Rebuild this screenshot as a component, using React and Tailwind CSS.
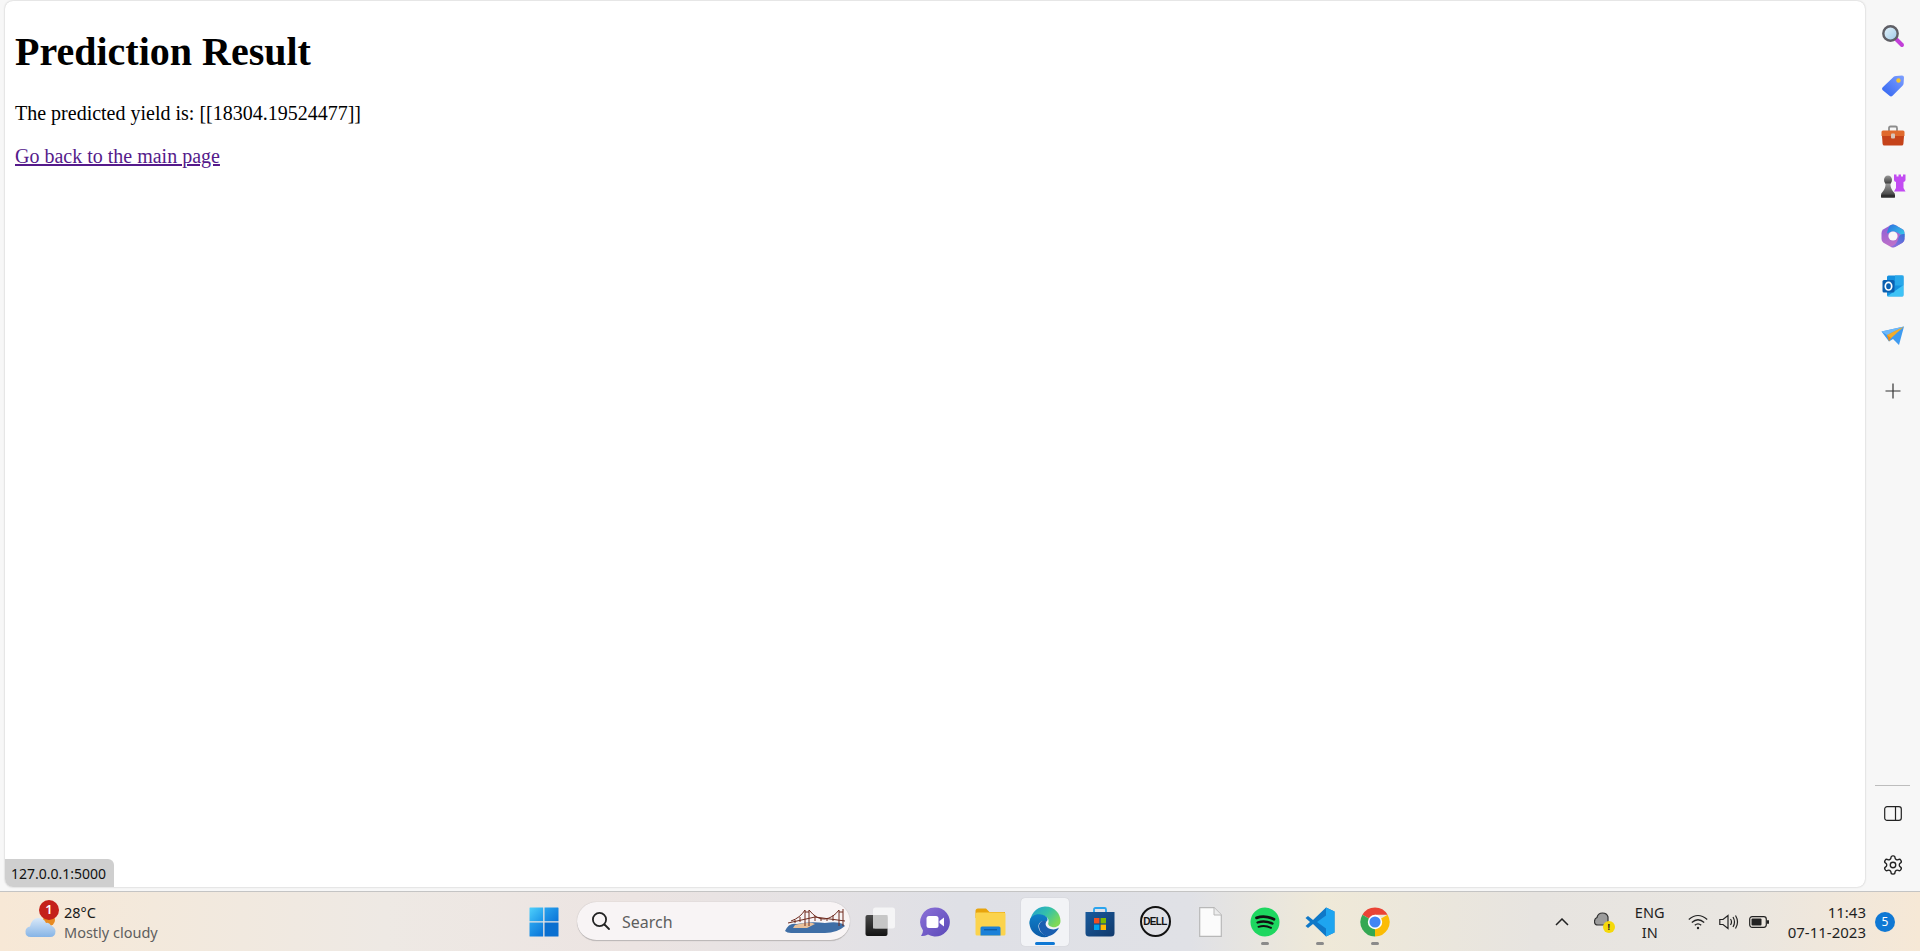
import React from "react";

const Search3D = () => (
  <svg width="24" height="24" viewBox="0 0 24 24">
    <defs><linearGradient id="lens" x1="0" y1="0" x2="1" y2="1"><stop offset="0" stopColor="#e8f4fb"/><stop offset="1" stopColor="#9cc9e8"/></linearGradient></defs>
    <path d="M14 14 L21 21" stroke="#c23fd8" strokeWidth="4" strokeLinecap="round"/>
    <circle cx="9.5" cy="9.5" r="7.2" fill="url(#lens)" stroke="#5f5f66" strokeWidth="2.4"/>
  </svg>
);
const Tag = () => (
  <svg width="24" height="24" viewBox="0 0 24 24">
    <defs><linearGradient id="tag" x1="0" y1="1" x2="1" y2="0"><stop offset="0" stopColor="#2f63f0"/><stop offset="1" stopColor="#7fa0ff"/></linearGradient></defs>
    <path d="M1.5 13.5 L13 2.6 Q13.8 2 15 2 L21 1.5 Q23 1.5 23 3.5 L22.6 9.5 Q22.5 10.8 21.5 11.7 L11.5 21.8 Q10 23 8.5 21.8 L1.5 16 Q0.5 14.8 1.5 13.5Z" fill="url(#tag)"/>
    <circle cx="17.5" cy="6.5" r="2.2" fill="#f6c62f"/>
  </svg>
);
const Toolbox = () => (
  <svg width="24" height="22" viewBox="0 0 24 22">
    <path d="M8 6 V3 Q8 1.5 9.5 1.5 H14.5 Q16 1.5 16 3 V6" fill="none" stroke="#8d8d8d" strokeWidth="1.8"/>
    <path d="M0.5 7 Q0.5 5.5 2 5.5 H22 Q23.5 5.5 23.5 7 V11 H0.5Z" fill="#e06a2d"/>
    <path d="M1 11 H23 L22.4 19 Q22.2 20.5 20.6 20.5 H3.4 Q1.8 20.5 1.6 19Z" fill="#c5431a"/>
    <rect x="10" y="8.5" width="4" height="5" rx="1" fill="#d8c4b8"/>
  </svg>
);
const Chess = () => (
  <svg width="26" height="24" viewBox="0 0 26 24">
    <defs><linearGradient id="pawn" x1="0" y1="0" x2="0" y2="1"><stop offset="0" stopColor="#9a9a9a"/><stop offset="1" stopColor="#333"/></linearGradient></defs>
    <path d="M14 0.5 H16.5 V2.5 H18.5 V0.5 H21 V2.5 H23 V0.5 H25.5 V6 Q25.5 7.5 23.5 8 V14 L25.5 17.5 H14 L16 14 V8 Q14 7.5 14 6Z" fill="#c24bf2"/>
    <ellipse cx="8" cy="6" rx="4" ry="4.5" fill="url(#pawn)"/>
    <path d="M5.6 9.5 H10.4 Q10.4 14.5 13.5 18 Q15 19 15 21 V23.5 H1 V21 Q1 19 2.5 18 Q5.6 14.5 5.6 9.5Z" fill="url(#pawn)"/>
    <rect x="1" y="20.8" width="14" height="2.7" rx="1" fill="#2f2f2f"/>
  </svg>
);
const M365 = () => (
  <svg width="24" height="24" viewBox="0 0 24 24">
    <defs>
      <linearGradient id="ma" x1="0" y1="0" x2="0.3" y2="1"><stop offset="0" stopColor="#8a5fd8"/><stop offset="1" stopColor="#c070c8"/></linearGradient>
      <linearGradient id="mb" x1="0" y1="0" x2="1" y2="0.7"><stop offset="0" stopColor="#2a6fe0"/><stop offset="1" stopColor="#38c4e8"/></linearGradient>
      <linearGradient id="mc" x1="0" y1="1" x2="1" y2="0"><stop offset="0" stopColor="#9a6fe0"/><stop offset="1" stopColor="#3a70d8"/></linearGradient>
    </defs>
    <path d="M9.5 1.2 Q12 0 14.5 1.2 L21.5 5.3 Q23.5 6.5 23.5 9 V15 Q23.5 17.5 21.5 18.7 L14.5 22.8 Q12 24 9.5 22.8 L2.5 18.7 Q0.5 17.5 0.5 15 V9 Q0.5 6.5 2.5 5.3Z" fill="url(#ma)"/>
    <path d="M9.5 1.2 Q12 0 14.5 1.2 L21.5 5.3 Q23.5 6.5 23.5 9 V13 L18 9.5 Q12 5.5 6 9.5 Q7 3 9.5 1.2Z" fill="url(#mb)"/>
    <path d="M23.5 10 V15 Q23.5 17.5 21.5 18.7 L14.5 22.8 Q12 23.8 9.5 22.8 Q16 21 17.5 14 Q18.5 9.5 23.5 10Z" fill="url(#mc)"/>
    <circle cx="12" cy="12" r="4.6" fill="#f7f7f7"/>
  </svg>
);
const Outlook = () => (
  <svg width="22" height="22" viewBox="0 0 22 22">
    <rect x="5" y="0.5" width="16.5" height="21" rx="1.5" fill="#1490df"/>
    <rect x="13" y="0.5" width="8.5" height="10" fill="#28a8ea"/>
    <path d="M5 21.5 L21.5 10 V20 Q21.5 21.5 20 21.5Z" fill="#50d9ff" opacity=".7"/>
    <rect x="0.5" y="5" width="12" height="12.5" rx="1.5" fill="#0a5fb0"/>
    <ellipse cx="6.5" cy="11.2" rx="3.2" ry="3.8" fill="none" stroke="#fff" strokeWidth="1.7"/>
  </svg>
);
const Send = () => (
  <svg width="24" height="20" viewBox="0 0 24 20">
    <path d="M0.5 5.5 L23 0.5 L18 19 L12 13 L8 15.5Z" fill="#3f9bf0"/>
    <path d="M0.5 5.5 L23 0.5 L6 9 Z" fill="#6fb8f8"/>
    <path d="M6 9 L23 0.5 L8 14 Z" fill="#f3ac2a"/>
    <path d="M6 9 L8 15.5 L10 12Z" fill="#e78a1a"/>
  </svg>
);

const SidebarSlot = ({ children, h = "h-[50px]" }) => (
  <div className={`${h} flex items-center justify-center`}>{children}</div>
);

const Sidebar = () => (
  <div className="w-[55px] shrink-0 flex flex-col items-stretch">
    <div className="pt-[11px]">
      <SidebarSlot><Search3D /></SidebarSlot>
      <SidebarSlot><Tag /></SidebarSlot>
      <SidebarSlot><Toolbox /></SidebarSlot>
      <SidebarSlot><Chess /></SidebarSlot>
      <SidebarSlot><M365 /></SidebarSlot>
      <SidebarSlot><Outlook /></SidebarSlot>
      <SidebarSlot><Send /></SidebarSlot>
      <SidebarSlot h="h-[60px]">
        <svg width="16" height="16" viewBox="0 0 16 16"><path d="M8 0.5 V15.5 M0.5 8 H15.5" stroke="#333" strokeWidth="1.2"/></svg>
      </SidebarSlot>
    </div>
    <div className="mt-auto pb-[4px] flex flex-col items-center">
      <div className="w-[35px] h-px bg-[#bdbdbd] mb-[20px]" />
      <svg width="18" height="15" viewBox="0 0 18 15" className="mb-[33px]"><rect x="0.7" y="0.7" width="16.6" height="13.6" rx="2.4" fill="none" stroke="#222" strokeWidth="1.2"/><path d="M11.5 0.7 V14.3" stroke="#222" strokeWidth="1.2"/></svg>
      <svg width="22" height="22" viewBox="0 0 24 24" className="mb-[11px]" fill="none" stroke="#222" strokeWidth="1.5" strokeLinejoin="round"><path d="M12.22 2h-.44a2 2 0 0 0-2 2v.18a2 2 0 0 1-1 1.73l-.43.25a2 2 0 0 1-2 0l-.15-.08a2 2 0 0 0-2.73.73l-.22.38a2 2 0 0 0 .73 2.73l.15.1a2 2 0 0 1 1 1.72v.51a2 2 0 0 1-1 1.74l-.15.09a2 2 0 0 0-.73 2.73l.22.38a2 2 0 0 0 2.73.73l.15-.08a2 2 0 0 1 2 0l.43.25a2 2 0 0 1 1 1.73V20a2 2 0 0 0 2 2h.44a2 2 0 0 0 2-2v-.18a2 2 0 0 1 1-1.73l.43-.25a2 2 0 0 1 2 0l.15.08a2 2 0 0 0 2.73-.73l.22-.39a2 2 0 0 0-.73-2.73l-.15-.08a2 2 0 0 1-1-1.74v-.5a2 2 0 0 1 1-1.74l.15-.09a2 2 0 0 0 .73-2.73l-.22-.38a2 2 0 0 0-2.73-.73l-.15.08a2 2 0 0 1-2 0l-.43-.25a2 2 0 0 1-1-1.73V4a2 2 0 0 0-2-2z"/><circle cx="12" cy="12" r="3"/></svg>
    </div>
  </div>
);

const WeatherIcon = () => (
  <div className="relative w-[36px] h-[36px] shrink-0">
    <svg width="31" height="25" viewBox="0 0 31 25" className="absolute left-[1px] bottom-[2px]">
      <defs><linearGradient id="cl" x1="0" y1="0" x2="0" y2="1"><stop offset="0" stopColor="#d8e8f8"/><stop offset="1" stopColor="#86b4e6"/></linearGradient></defs>
      <circle cx="24" cy="7" r="6" fill="#e88a20"/>
      <path d="M6 24 Q0 24 0.5 18 Q1 14 5 13.5 Q7 5 13 5 Q19 5 21 10 Q24 9 26 12.5 Q30 14 30.5 18 Q30.5 24 25 24Z" fill="url(#cl)"/>
    </svg>
    <div className="absolute left-[15px] top-[-4px] w-[20px] h-[20px] rounded-full bg-[#c4201a] text-white flex items-center justify-center text-[13px] font-semibold leading-none">1</div>
  </div>
);

const WinLogo = () => (
  <svg width="30" height="30" viewBox="0 0 30 30">
    <defs>
      <linearGradient id="w1" x1="0" y1="0" x2="1" y2="1"><stop offset="0" stopColor="#4fd0fb"/><stop offset="1" stopColor="#1a94e8"/></linearGradient>
      <linearGradient id="w2" x1="0" y1="0" x2="1" y2="1"><stop offset="0" stopColor="#2aa4ee"/><stop offset="1" stopColor="#0a74d8"/></linearGradient>
    </defs>
    <path d="M1 0.5 H14.2 V14.2 H0.5 V1Q0.5 0.5 1 0.5Z" fill="url(#w1)"/>
    <path d="M15.5 0.5 H29 Q29.5 0.5 29.5 1 V14.2 H15.5Z" fill="url(#w2)"/>
    <path d="M0.5 15.5 H14.2 V29.5 H1 Q0.5 29.5 0.5 29Z" fill="url(#w2)"/>
    <path d="M15.5 15.5 H29.5 V29 Q29.5 29.5 29 29.5 H15.5Z" fill="#0a6fd0"/>
  </svg>
);

const Bridge = () => (
  <svg width="62" height="24" viewBox="0 0 62 24" className="absolute right-[3px] top-[7px]">
    <path d="M0 22 Q4 13 12 15 Q25 12 40 14 Q52 12 58 15 L60 17 Q52 24 40 24 H6 Q2 24 0 22Z" fill="#3f6ea6"/>
    <path d="M10 16 Q25 12 30 15 L22 19 H8Z" fill="#e8c09a"/>
    <path d="M3 14 L30 8 L60 12" stroke="#6e2a1e" strokeWidth="1" fill="none"/>
    <g stroke="#6e2a1e" strokeWidth="1" fill="none">
      <path d="M20 1 V17 M24 1 V17 M20 3 H24 M58 0 V17 M54 1 V17 M54 3 H58"/>
      <path d="M6 12 Q15 9 20 1 M24 1 Q32 11 40 10 Q48 9 54 1"/>
      <path d="M10 11 V14 M15 8 V13 M30 7 V12 M36 9 V12 M42 9 V12 M48 6 V12"/>
    </g>
  </svg>
);

const TaskView = () => (
  <svg width="30" height="30" viewBox="0 0 30 30">
    <defs><linearGradient id="tv" x1="0" y1="0" x2="0" y2="1"><stop offset="0" stopColor="#4a4a4a"/><stop offset="1" stopColor="#141414"/></linearGradient></defs>
    <rect x="0.5" y="8" width="22" height="21" rx="2" fill="url(#tv)"/>
    <rect x="8" y="0.5" width="22" height="21" rx="2.5" fill="#fff" opacity=".65"/>
    <rect x="8" y="8" width="14.5" height="13.5" fill="#c8c8c8" opacity=".9"/>
  </svg>
);
const Meet = () => (
  <svg width="30" height="30" viewBox="0 0 30 30">
    <defs><linearGradient id="mt" x1="0" y1="0" x2="1" y2="1"><stop offset="0" stopColor="#8c72d8"/><stop offset="1" stopColor="#5a48b8"/></linearGradient></defs>
    <path d="M15 0.5 A14.5 14.5 0 1 1 8 27.5 Q4 29.5 1 29 Q3 26 3 23.5 A14.5 14.5 0 0 1 15 0.5Z" fill="url(#mt)"/>
    <rect x="6.5" y="9" width="12" height="12" rx="2.5" fill="#fff"/>
    <path d="M19.5 14 L24 10.5 V19.5 L19.5 16Z" fill="#fff"/>
  </svg>
);
const Explorer = () => (
  <svg width="31" height="28" viewBox="0 0 31 28">
    <path d="M0.5 3 Q0.5 0.5 3 0.5 H11 L14.5 4 H30 V10 H0.5Z" fill="#e8a40c"/>
    <rect x="0.5" y="4.5" width="30" height="23" rx="1.5" fill="#fbd34d"/>
    <path d="M5.5 20 Q5.5 18.5 7 18.5 H24 Q25.5 18.5 25.5 20 V27.5 H5.5Z" fill="#1a80d8"/>
    <rect x="9" y="21" width="13" height="1.4" fill="#0f5ea8"/>
  </svg>
);
const Edge = () => (
  <svg width="32" height="32" viewBox="0 0 32 32">
    <defs>
      <linearGradient id="e1" x1="0" y1="0" x2="1" y2="0.6"><stop offset="0" stopColor="#1e9ad8"/><stop offset=".55" stopColor="#35c1a8"/><stop offset="1" stopColor="#7ed957"/></linearGradient>
      <linearGradient id="e2" x1="0" y1="0" x2="0" y2="1"><stop offset="0" stopColor="#0f7fc8"/><stop offset="1" stopColor="#0c5aa8"/></linearGradient>
    </defs>
    <path d="M16 0.5 C26 0.5 31.5 8 31.5 15 C31.5 20 27 22 23 21 C20 20 18.5 18.5 19.5 16 C20.5 12 16 9 11 10 C6 11 2 15 0.5 19 C0.5 9 7 0.5 16 0.5Z" fill="url(#e1)"/>
    <path d="M0.5 16 C1 10 7 7.5 12 8.5 C18 9.5 20 13 17.5 15.5 C13 14 9 17 9.5 21 C10 26 15 29.5 20 30.5 C10 33.5 0 26 0.5 16Z" fill="url(#e2)"/>
    <path d="M10 21 C9.5 16.5 14 13.5 17.5 15.5 C15.5 18 17 22 21.5 23 C25 24 28 23 30 21.5 C27 28 20 31.5 16 29.5 C13 28 10.5 25 10 21Z" fill="#1a5fb0"/>
  </svg>
);
const Store = () => (
  <svg width="30" height="30" viewBox="0 0 30 30">
    <defs><linearGradient id="st" x1="0" y1="0" x2="1" y2="1"><stop offset="0" stopColor="#1a5a9c"/><stop offset="1" stopColor="#113a6c"/></linearGradient></defs>
    <path d="M9 5 V2.5 Q9 1 10.5 1 H19.5 Q21 1 21 2.5 V5" fill="none" stroke="#2aa4ee" strokeWidth="1.8"/>
    <path d="M0.5 5 H29.5 V26 Q29.5 29.5 26 29.5 H4 Q0.5 29.5 0.5 26Z" fill="url(#st)"/>
    <rect x="9" y="11" width="5.4" height="5.4" fill="#f25022"/>
    <rect x="15.6" y="11" width="5.4" height="5.4" fill="#7fba00"/>
    <rect x="9" y="17.6" width="5.4" height="5.4" fill="#00a4ef"/>
    <rect x="15.6" y="17.6" width="5.4" height="5.4" fill="#ffb900"/>
  </svg>
);
const Dell = () => (
  <div className="relative w-[31px] h-[31px] rounded-full border-2 border-[#111] flex items-center justify-center">
    <span className="font-['Liberation_Sans',sans-serif] font-bold text-[10px] tracking-[-0.6px] leading-none text-[#111]">DELL</span>
  </div>
);
const FileIcon = () => (
  <svg width="23" height="30" viewBox="0 0 23 30">
    <path d="M0.7 0.7 H15 L22.3 8 V29.3 H0.7Z" fill="#fbfbfb" stroke="#b8b8b8" strokeWidth="1.2"/>
    <path d="M15 0.7 V8 H22.3" fill="#ececec" stroke="#b8b8b8" strokeWidth="1"/>
  </svg>
);
const Spotify = () => (
  <svg width="30" height="30" viewBox="0 0 30 30">
    <circle cx="15" cy="15" r="14.5" fill="#1ed760"/>
    <g fill="none" stroke="#111" strokeLinecap="round">
      <path d="M6.5 10.8 Q15 8 24 12.2" strokeWidth="2.8"/>
      <path d="M7.5 15.5 Q15 13 22.5 16.6" strokeWidth="2.3"/>
      <path d="M8.5 19.8 Q15 17.8 21 20.8" strokeWidth="1.9"/>
    </g>
  </svg>
);
const VSCode = () => (
  <svg width="30" height="30" viewBox="0 0 30 30">
    <path d="M21 0.5 L29.5 4.5 V25.5 L21 29.5 L8 17 L3 21 L0.5 19 L5 15 L0.5 11 L3 9 L8 13Z" fill="#0f78c8"/>
    <path d="M21 0.5 L29.5 4.5 V25.5 L21 29.5 Z M21 8.5 L12 15 L21 21.5Z" fill="#1ea5f0" fillRule="evenodd"/>
  </svg>
);
const Chrome = () => (
  <svg width="30" height="30" viewBox="0 0 30 30">
    <path d="M15 15 L2.4 7.7 A14.5 14.5 0 0 1 27.6 7.7 H15Z" fill="#ea4335"/>
    <path d="M15 15 L27.6 7.7 A14.5 14.5 0 0 1 15 29.5Z" fill="#fbbc05"/>
    <path d="M15 15 L15 29.5 A14.5 14.5 0 0 1 2.4 7.7Z" fill="#34a853"/>
    <circle cx="15" cy="15" r="7.2" fill="#fff"/>
    <circle cx="15" cy="15" r="5.6" fill="#4285f4"/>
  </svg>
);

const TaskItem = ({ children, active, running }) => (
  <div className={`relative w-[48px] h-[48px] mx-[3.5px] shrink-0 rounded-[4px] flex items-center justify-center ${active ? "bg-[#f2f3f6] shadow-[0_0_1px_rgba(0,0,0,0.2)]" : ""}`}>
    {children}
    {active && <div className="absolute bottom-[1px] left-[14px] w-[20px] h-[3px] rounded-full bg-[#0f78d4]" />}
    {running && <div className="absolute bottom-[1px] left-[20px] w-[8px] h-[3px] rounded-full bg-[#8a8a8a]" />}
  </div>
);

const Taskbar = () => (
  <div className="h-[60px] shrink-0 border-t border-[#c4c4c4] flex items-center bg-[linear-gradient(90deg,#f7e8d6_0%,#f3e9dc_8%,#eee9e4_20%,#ece4e2_33%,#dfe0e6_50%,#e0e1e6_62%,#efe9d8_69%,#e7e4e0_80%,#e9e6e1_90%,#f6e8d6_100%)] font-['Noto_Sans',sans-serif]">
    <div className="w-[525px] shrink-0 pl-[24px] flex items-center gap-[4px]">
      <WeatherIcon />
      <div className="flex flex-col leading-[20px] text-[14.5px] pt-[1px]">
        <span className="text-[#1a1a1a]">28°C</span>
        <span className="text-[#5e5e5e]">Mostly cloudy</span>
      </div>
    </div>
    <div className="w-[38px] h-[48px] shrink-0 flex items-center justify-center"><WinLogo /></div>
    <div className="relative w-[273px] h-[39px] ml-[14px] shrink-0 rounded-full bg-[#f8f4f5] border-b border-[#bdb9b9] shadow-[0_0_1px_rgba(0,0,0,0.25)] flex items-center pl-[14px]">
      <svg width="20" height="20" viewBox="0 0 20 20" fill="none" stroke="#222" strokeWidth="1.8" strokeLinecap="round"><circle cx="8.5" cy="8.5" r="6.6"/><path d="M13.5 13.5 L18 18"/></svg>
      <span className="ml-[11px] pt-[1px] text-[16px] text-[#5e5e5e]">Search</span>
      <Bridge />
    </div>
    <div className="ml-[2.5px] flex items-center">
      <TaskItem><TaskView /></TaskItem>
      <TaskItem><Meet /></TaskItem>
      <TaskItem><Explorer /></TaskItem>
      <TaskItem active><Edge /></TaskItem>
      <TaskItem><Store /></TaskItem>
      <TaskItem><Dell /></TaskItem>
      <TaskItem><FileIcon /></TaskItem>
      <TaskItem running><Spotify /></TaskItem>
      <TaskItem running><VSCode /></TaskItem>
      <TaskItem running><Chrome /></TaskItem>
    </div>
    <div className="ml-auto flex items-center pr-[25px]">
      <svg width="14" height="8" viewBox="0 0 14 8" fill="none" stroke="#222" strokeWidth="1.5" className="mr-[25px]"><path d="M1 7 L7 1 L13 7"/></svg>
      <div className="relative w-[20px] h-[20px] mr-[16px]">
        <svg width="17" height="14" viewBox="0 0 17 14" className="absolute left-0 top-0"><path d="M4 13 Q0.5 13 0.5 9.5 Q0.5 6.5 3 5.5 Q4 1 8.5 1 Q13 1 14 5 L14 13Z" fill="#9c9c9c" stroke="#333" strokeWidth="1.2"/></svg>
        <div className="absolute right-[-1px] bottom-[-1px] w-[12px] h-[12px] rounded-full bg-[#f5d90a] text-[9px] font-bold leading-[12px] text-center text-[#222]">!</div>
      </div>
      <div className="w-[40px] text-center text-[14.5px] leading-[20px] text-[#1f1f1f] mr-[18px]">ENG<br />IN</div>
      <svg width="20" height="16" viewBox="0 0 20 16" fill="none" stroke="#222" strokeWidth="1.2" className="mr-[11px]"><path d="M0.8 5.5 Q10 -2.5 19.2 5.5 M3.8 8.5 Q10 3 16.2 8.5 M6.8 11.3 Q10 8.5 13.2 11.3"/><circle cx="10" cy="14" r="1.2" fill="#222" stroke="none"/></svg>
      <svg width="20" height="16" viewBox="0 0 20 16" fill="none" stroke="#222" strokeWidth="1.2" className="mr-[10px]"><path d="M0.8 5.5 H4 L9 1.5 V14.5 L4 10.5 H0.8Z"/><path d="M11.5 5 Q13.5 8 11.5 11 M14 3 Q17 8 14 13 M16.5 1.5 Q20.5 8 16.5 14.5"/></svg>
      <svg width="20" height="12" viewBox="0 0 20 12" className="mr-[19px]"><rect x="0.7" y="0.7" width="16.6" height="10.6" rx="2.5" fill="none" stroke="#222" strokeWidth="1.2"/><rect x="2.5" y="2.5" width="10" height="7" rx="1" fill="#222"/><rect x="18" y="4" width="2" height="4" rx="1" fill="#222"/></svg>
      <div className="flex flex-col items-end text-[15px] leading-[20px] text-[#1f1f1f] mr-[9px]">
        <span>11:43</span>
        <span>07-11-2023</span>
      </div>
      <div className="w-[20px] h-[20px] rounded-full bg-[#0f78d4] text-white text-[12px] leading-[20px] text-center">5</div>
    </div>
  </div>
);

export default function App() {
  return (
    <div className="w-[1920px] h-[951px] overflow-hidden flex flex-col bg-[#f7f7f7]">
      <div className="flex-1 min-h-0 flex">
        <div className="flex-1 min-w-0 pl-[5px] pt-[1px] pb-[4px]">
          <div className="relative h-full rounded-[8px] bg-white shadow-[0_0_2px_rgba(0,0,0,0.25)] overflow-hidden pl-[10px] pt-[28px] font-['Liberation_Serif',serif] text-black">
            <h1 className="text-[40px] font-bold leading-[46px] mb-[27px]">Prediction Result</h1>
            <p className="text-[20px] leading-[23px] mb-[20px]">The predicted yield is: [[18304.19524477]]</p>
            <a href="#" className="block text-[20px] leading-[23px] text-[#551a8b] underline">Go back to the main page</a>
            <div className="absolute left-0 bottom-0 h-[28px] w-[109px] rounded-tr-[6px] bg-[#cfcfcf] pl-[6px] flex items-center font-['Noto_Sans',sans-serif] text-[14px] text-[#111]">127.0.0.1:5000</div>
          </div>
        </div>
        <Sidebar />
      </div>
      <Taskbar />
    </div>
  );
}
